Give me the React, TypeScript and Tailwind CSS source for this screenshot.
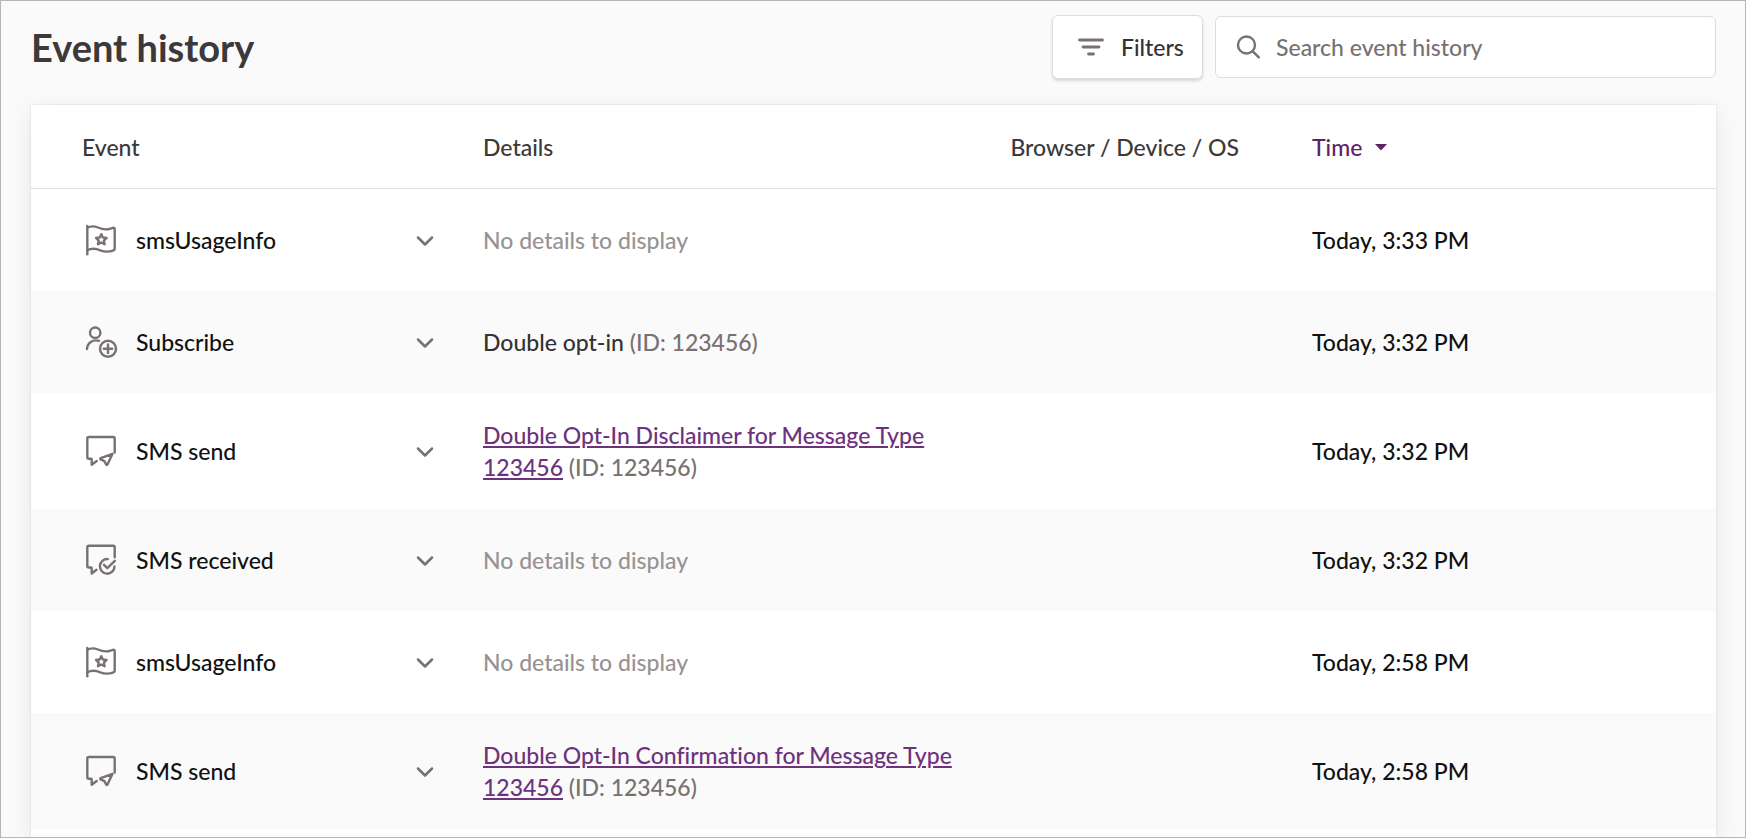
import type React from "react"
import { useState } from "react"

type EventKind = "custom" | "subscribe" | "smsSend" | "smsReceived"

interface EventRow {
  id: number
  kind: EventKind
  name: string
  detail?: string
  detailId?: string
  isLink?: boolean
  time: string
}

const events: EventRow[] = [
  { id: 1, kind: "custom", name: "smsUsageInfo", time: "Today, 3:33 PM" },
  { id: 2, kind: "subscribe", name: "Subscribe", detail: "Double opt-in", detailId: "123456", time: "Today, 3:32 PM" },
  {
    id: 3,
    kind: "smsSend",
    name: "SMS send",
    detail: "Double Opt-In Disclaimer for Message Type 123456",
    detailId: "123456",
    isLink: true,
    time: "Today, 3:32 PM",
  },
  { id: 4, kind: "smsReceived", name: "SMS received", time: "Today, 3:32 PM" },
  { id: 5, kind: "custom", name: "smsUsageInfo", time: "Today, 2:58 PM" },
  {
    id: 6,
    kind: "smsSend",
    name: "SMS send",
    detail: "Double Opt-In Confirmation for Message Type 123456",
    detailId: "123456",
    isLink: true,
    time: "Today, 2:58 PM",
  },
]

const iconPaths: Record<EventKind, React.ReactNode> = {
  custom: (
    <>
      <path d="M5.3 4v28.2" />
      <path d="M5.3 5.8c3-1.6 7-1.8 10.6-.3 4.2 1.8 8.5 2.6 12.6 1.1l2.6-.8c.9-.2 1.6.3 1.6 1.2v19.8c0 .8-.4 1.3-1.2 1.6-4.4 1.7-9 1.6-13.2-.1-4.4-1.9-8.8-2.1-13-.1" />
      <path d="M19.3 12.2l1.6 3.3 3.7.5-2.7 2.6.7 3.7-3.3-1.8-3.3 1.8.7-3.7-2.7-2.6 3.7-.5z" />
    </>
  ),
  subscribe: (
    <>
      <circle cx="13.2" cy="8.7" r="5.2" />
      <path d="M5 25c.3-6 5.6-10 12-8.2" />
      <circle cx="26" cy="24.7" r="8" />
      <path d="M26 20.5v8.4M21.8 24.7h8.4" />
    </>
  ),
  smsSend: (
    <>
      <path d="M32.7 19.5V5.5c0-.9-.6-1.5-1.5-1.5H6.8c-.9 0-1.5.6-1.5 1.5v18.7c0 .9.6 1.5 1.5 1.5h2.4c.3 0 .5.2.5.5v5.5l5-3.7" />
      <path d="M30.5 20.8L18.7 25.2c-.6.2-.6.9-.1 1.2l3.8 1.7 1.9 3.5c.3.5 1 .4 1.2-.1z" />
    </>
  ),
  smsReceived: (
    <>
      <path d="M32.7 15.3V5.3c0-.9-.6-1.5-1.5-1.5H6.8c-.9 0-1.5.6-1.5 1.5v18.7c0 .9.6 1.5 1.5 1.5h2.4c.3 0 .5.2.5.5v5.5l4.8-3.7" />
      <path d="M25.8 17.1a7.3 7.3 0 1 0 6.7 7.4" />
      <path d="M22 22.8l3.3 3.3 7.5-7.3" />
    </>
  ),
}

const EventIcon: React.FC<{ kind: EventKind }> = ({ kind }) => (
  <svg
    viewBox="0 0 36 36"
    className="size-9 shrink-0 text-[#787172]"
    fill="none"
    stroke="currentColor"
    strokeWidth="2.4"
    strokeLinecap="round"
    strokeLinejoin="round"
    aria-hidden="true"
  >
    {iconPaths[kind]}
  </svg>
)

const Details: React.FC<{ event: EventRow }> = ({ event }) => {
  if (!event.detail) {
    return <span className="text-[#989293]">No details to display</span>
  }

  return (
    <>
      {event.isLink ? (
        <a href="#message" className="text-[#6e317d] underline decoration-2 underline-offset-2">
          {event.detail}
        </a>
      ) : (
        <span className="text-[#333132]">{event.detail}</span>
      )}{" "}
      <span className="text-[#787172]">(ID: {event.detailId})</span>
    </>
  )
}

const App: React.FC = () => {
  const [query, setQuery] = useState("")

  return (
    <div className="flex h-screen flex-col overflow-hidden border border-[#b5b5b5] bg-[#fafafa] pr-[29px] pl-[30px] font-['Lato',sans-serif] text-[23px] leading-8 font-medium text-[#111111] [font-variant-ligatures:none]">
      <header className="flex items-center justify-between py-3.5">
        <h1 className="text-[38px] leading-12 font-bold text-[#3b3939]">Event history</h1>
        <div className="flex items-center gap-3">
          <button
            type="button"
            className="flex h-16 w-[151px] items-center gap-4 rounded-md border border-[#dddddd] bg-white pl-6 text-[#333132] shadow-[0_2px_3px_rgba(0,0,0,0.14)]"
          >
            <svg
              viewBox="0 0 28 24"
              className="h-6 w-7 shrink-0 text-[#787172]"
              fill="none"
              stroke="currentColor"
              strokeWidth="2.8"
              strokeLinecap="round"
              aria-hidden="true"
            >
              <path d="M2.5 5h23M6 12h16M11.5 19h5" />
            </svg>
            Filters
          </button>
          <label className="flex h-[62px] w-[501px] items-center gap-4 rounded-md border border-[#dddddd] bg-white px-5">
            <svg
              viewBox="0 0 24 24"
              className="size-6 shrink-0 text-[#787172]"
              fill="none"
              stroke="currentColor"
              strokeWidth="2.4"
              strokeLinecap="round"
              aria-hidden="true"
            >
              <circle cx="10.5" cy="10" r="8.5" />
              <path d="M16.8 16.3l6 6" />
            </svg>
            <input
              type="text"
              aria-label="Search event history"
              placeholder="Search event history"
              value={query}
              onChange={(e) => setQuery(e.target.value)}
              className="w-full bg-transparent outline-none placeholder:text-[#787172]"
            />
          </label>
        </div>
      </header>

      <main className="mt-3 flex-1 bg-white shadow-[0_6px_24px_rgba(0,0,0,0.08),0_0_2px_rgba(0,0,0,0.14)]">
        <table className="w-full table-fixed border-separate border-spacing-0 text-left">
          <thead>
            <tr className="h-[84px] text-[#3b3939]">
              <th className="w-[25.4%] border-b border-[#dddddd] pr-6 pl-[51px] font-medium">Event</th>
              <th className="w-[31.3%] border-b border-[#dddddd] px-6 font-medium">Details</th>
              <th className="w-[17.9%] border-b border-[#dddddd] px-6 font-medium whitespace-nowrap">
                Browser / Device / OS
              </th>
              <th className="border-b border-[#dddddd] px-6 font-medium" aria-sort="descending">
                <button type="button" className="flex items-center gap-3 text-[#5f2167]">
                  Time
                  <svg viewBox="0 0 14 8" className="h-2 w-3.5" fill="currentColor" aria-hidden="true">
                    <path d="M1 1h12L7 7.5z" />
                  </svg>
                </button>
              </th>
            </tr>
          </thead>
          <tbody>
            {events.map((event) => (
              <tr key={event.id} className="h-[102px] even:bg-[#fafafa]">
                <td className="pr-6 pl-[51px]">
                  <div className="flex items-center gap-[18px]">
                    <EventIcon kind={event.kind} />
                    <span className="flex-1">{event.name}</span>
                    <button type="button" aria-label={`Expand ${event.name}`}>
                      <svg
                        viewBox="0 0 20 20"
                        className="size-5 text-[#787172]"
                        fill="none"
                        stroke="currentColor"
                        strokeWidth="2.5"
                        strokeLinecap="round"
                        strokeLinejoin="round"
                        aria-hidden="true"
                      >
                        <path d="M3 7.5l7 7 7-7" />
                      </svg>
                    </button>
                  </div>
                </td>
                <td className="px-6 py-[26px]">
                  <Details event={event} />
                </td>
                <td className="px-6" />
                <td className="px-6">{event.time}</td>
              </tr>
            ))}
          </tbody>
        </table>
      </main>
    </div>
  )
}

export default App
